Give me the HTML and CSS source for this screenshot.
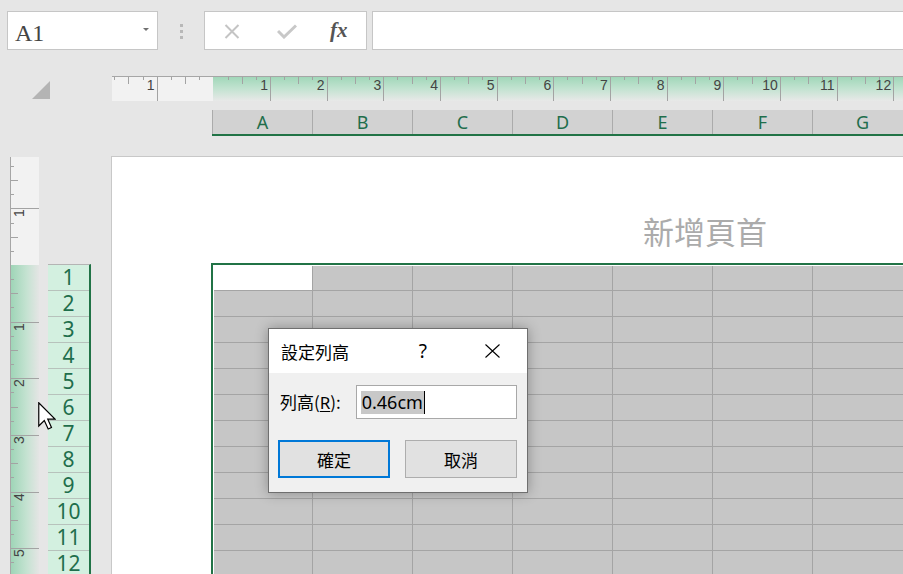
FILE: index.html
```html
<!DOCTYPE html>
<html lang="zh-Hant">
<head>
<meta charset="utf-8">
<title>Excel</title>
<link rel="stylesheet" href="styles.css">
</head>
<body>
<div class="app">
  <div class="formula-row">
    <div class="namebox"><span class="name">A1</span><span class="caret"></span></div>
    <div class="grip"><i></i><i></i><i></i></div>
    <div class="fbtns">
      <svg class="ico-x" width="16" height="15" viewBox="0 0 16 15"><path d="M1.5 1 L14.5 14 M14.5 1 L1.5 14" stroke="#c4c4c4" stroke-width="2" fill="none"/></svg>
      <svg class="ico-check" width="20" height="15" viewBox="0 0 20 15"><path d="M1 7 L7 13 L19 1.5" stroke="#c8c8c8" stroke-width="3" fill="none"/></svg>
      <span class="fx">fx</span>
    </div>
    <div class="finput"></div>
  </div>

  <div class="ruler-row">
    <div class="corner"><span class="selall"></span></div>
    <div class="hruler">
      <div class="htrack">
        <div class="hcm nob"><span>1</span></div>
        <div class="hcm"></div>
        <div class="hcm nob"><span>1</span></div>
        <div class="hcm"><span>2</span></div>
        <div class="hcm"><span>3</span></div>
        <div class="hcm"><span>4</span></div>
        <div class="hcm"><span>5</span></div>
        <div class="hcm"><span>6</span></div>
        <div class="hcm"><span>7</span></div>
        <div class="hcm"><span>8</span></div>
        <div class="hcm"><span>9</span></div>
        <div class="hcm"><span>10</span></div>
        <div class="hcm"><span>11</span></div>
        <div class="hcm"><span>12</span></div>
        <div class="hcm"></div>
      </div>
    </div>
  </div>

  <div class="colhead-row">
    <div class="colheads">
      <div class="ch">A</div>
      <div class="ch">B</div>
      <div class="ch">C</div>
      <div class="ch">D</div>
      <div class="ch">E</div>
      <div class="ch">F</div>
      <div class="ch">G</div>
    </div>
  </div>

  <div class="main">
    <div class="vruler">
      <div class="vtrack">
        <div class="vcm nob"></div>
        <div class="vcm"><span>1</span></div>
        <div class="vcm nob"></div>
        <div class="vcm"><span>1</span></div>
        <div class="vcm"><span>2</span></div>
        <div class="vcm"><span>3</span></div>
        <div class="vcm"><span>4</span></div>
        <div class="vcm"><span>5</span></div>
      </div>
    </div>
    <div class="rowheads">
      <div class="rh">1</div>
      <div class="rh">2</div>
      <div class="rh">3</div>
      <div class="rh">4</div>
      <div class="rh">5</div>
      <div class="rh">6</div>
      <div class="rh">7</div>
      <div class="rh">8</div>
      <div class="rh">9</div>
      <div class="rh">10</div>
      <div class="rh">11</div>
      <div class="rh">12</div>
    </div>
    <div class="page">
      <div class="page-header">新增頁首</div>
      <div class="sheet">
        <div class="cells"><div class="a1"></div></div>
      </div>
    </div>
  </div>
</div>

<div class="dialog">
  <div class="dlg-title">
    <span class="dlg-name">設定列高</span>
    <span class="dlg-help">?</span>
    <svg class="dlg-close" width="15" height="14" viewBox="0 0 15 14"><path d="M0.5 0.5 L14.5 13.5 M14.5 0.5 L0.5 13.5" stroke="#000" stroke-width="1.1" fill="none"/></svg>
  </div>
  <div class="dlg-body">
    <div class="dlg-row">
      <label class="dlg-label">列高(<u>R</u>):</label>
      <div class="dlg-input"><span class="sel">0.46cm</span><span class="text-caret"></span></div>
    </div>
    <div class="dlg-buttons">
      <div class="btn btn-default">確定</div>
      <div class="btn">取消</div>
    </div>
  </div>
</div>

<svg class="mouse" width="18" height="28" viewBox="0 0 12 18.7"><path d="M0.5 0.5 V16 L4.2 12.4 L6.8 18 L9 17 L6.5 11.5 H11.5 Z" fill="#fff" stroke="#000" stroke-width="0.8" stroke-linejoin="miter"/></svg>
</body>
</html>
```

FILE: styles.css
```css
* { box-sizing: border-box; margin: 0; padding: 0; }
html, body { width: 903px; height: 574px; overflow: hidden; }
body {
  background: #e6e6e6;
  font-family: "Noto Sans", "Noto Sans CJK TC", sans-serif;
  color: #000;
  position: relative;
}
.app { display: flex; flex-direction: column; height: 574px; }

/* formula bar */
.formula-row { display: flex; height: 39px; margin: 11px -2px 0 7px; }
.namebox {
  width: 151px; border: 1px solid #c6c6c6; background: #fff;
  display: flex; justify-content: space-between; align-items: flex-start;
  padding: 8px 8px 0 7px;
}
.name { font-family: "Liberation Serif", serif; font-size: 24px; line-height: 26px; color: #444; }
.caret {
  margin-top: 8px; width: 0; height: 0;
  border-left: 3px solid transparent; border-right: 3px solid transparent;
  border-top: 3px solid #707070;
}
.grip { width: 46px; display: flex; flex-direction: column; align-items: center; gap: 3px; padding-top: 13px; }
.grip i { display: block; width: 3px; height: 3px; background: #b8b8b8; }
.fbtns {
  width: 163px; border: 1px solid #c6c6c6; background: #fff;
  display: flex; align-items: center; padding-left: 19px;
}
.ico-x { margin-top: 1px; }
.ico-check { margin-left: 37px; margin-top: 2px; }
.fx {
  margin-left: 33px; font-family: "Liberation Serif", serif; font-style: italic; font-weight: bold;
  font-size: 21px; color: #555; line-height: 25px;
}
.finput { flex: 1; margin-left: 5px; border: 1px solid #c6c6c6; border-right: none; background: #fff; }

/* horizontal ruler */
.ruler-row { display: flex; height: 25px; margin-top: 26px; }
.corner { width: 112px; padding: 5px 0 0 32px; }
.selall {
  display: block; width: 0; height: 0;
  border-left: 18px solid transparent; border-bottom: 18px solid #b4b4b4;
}
.hruler {
  flex: 1; overflow: hidden; border-top: 1px solid #a6a6a6;
  background:
    linear-gradient(#f2f2f2, #f2f2f2) 0 0 / 101px 100% no-repeat,
    linear-gradient(to bottom, #a1d7b9 0%, #c3e3d1 50%, #e8e9e8 100%);
}
.htrack { display: flex; margin-left: -12px; height: 24px; }
.hcm {
  flex: 0 0 56.67px; height: 24px; border-left: 1px solid #a3a3a3;
  text-align: right; padding-right: 2px;
  font-family: "Liberation Sans", sans-serif; font-size: 14px; line-height: 16px; color: #444;
  background-image:
    linear-gradient(#a3a3a3, #a3a3a3),
    linear-gradient(#a3a3a3, #a3a3a3),
    linear-gradient(#a3a3a3, #a3a3a3);
  background-size: 1px 3px, 1px 7px, 1px 3px;
  background-position: 14.2px 0, 28.3px 0, 42.5px 0;
  background-repeat: no-repeat;
  background-origin: border-box;
}
.hcm.nob { border-left: none; }

/* column headers */
.colhead-row { display: flex; margin-top: 9px; padding-left: 212px; height: 26px; }
.colheads { flex: 1; display: flex; background: #d2d2d2; border-bottom: 2px solid #217346; overflow: hidden; }
.ch {
  flex: 0 0 100px; border-left: 1px solid #ababab; text-align: center;
  font-size: 18px; line-height: 24px; color: #1f6e4c;
}

/* main area */
.main { flex: 1; display: flex; margin-top: 20px; min-height: 0; }
.vruler {
  width: 29px; margin: 1px 0 0 10px; border-left: 1px solid #a6a6a6; overflow: hidden;
  background:
    linear-gradient(#f2f2f2, #f2f2f2) 0 0 / 100% 108px no-repeat,
    linear-gradient(to right, #9fd5b7 0%, #c4e2d1 55%, #e4e5e4 100%);
}
.vtrack { margin-top: -5.33px; }
.vcm {
  height: 56.67px; border-top: 1px solid #a3a3a3;
  font-family: "Liberation Sans", sans-serif; font-size: 14px; line-height: 16px; color: #444;
  background-image:
    linear-gradient(#a3a3a3, #a3a3a3),
    linear-gradient(#a3a3a3, #a3a3a3),
    linear-gradient(#a3a3a3, #a3a3a3);
  background-size: 3px 1px, 7px 1px, 3px 1px;
  background-position: 0 14.2px, 0 28.3px, 0 42.5px;
  background-repeat: no-repeat;
  background-origin: border-box;
}
.vcm.nob { border-top: none; }
.vcm span {
  display: block; width: 16px; height: 16px; margin-top: -4px;
  text-align: center; transform: rotate(-90deg);
}

.rowheads {
  width: 43px; margin: 108px 0 0 9px; align-self: flex-start;
  background: #d3f0e0; border-top: 1px solid #b4b4b4; border-right: 2px solid #217346;
}
.rh {
  height: 26px; border-bottom: 1px solid #b7c2bc; text-align: center;
  font-size: 21px; line-height: 25px; color: #1f6e4c;
}

.page {
  flex: 1; margin-left: 20px; background: #fff;
  border-left: 1px solid #c8c8c8; border-top: 1px solid #c8c8c8;
  display: flex; flex-direction: column; overflow: hidden;
}
.page-header {
  height: 106px; flex: none; padding: 58px 0 0 531px;
  font-family: "Noto Sans CJK TC", sans-serif; font-size: 31px; line-height: 45px;
  color: #ababab; white-space: nowrap;
}
.page-header { padding-top: 51px; }
.sheet {
  flex: 1; margin-left: 99px; background: #fff;
  border-top: 2px solid #217346; border-left: 2px solid #217346;
  padding: 1px 0 0 1px;
}
.cells {
  height: 100%;
  background-color: #c6c6c6;
  background-image:
    linear-gradient(to right, #a4a4a4 1px, transparent 1px),
    linear-gradient(to bottom, #a4a4a4 1px, transparent 1px);
  background-size: 100px 26px, 100px 26px;
  background-position: 98px 0, 0 24px;
}
.a1 { width: 98px; height: 24px; background: #fff; }

/* dialog */
.dialog {
  position: absolute; left: 268px; top: 328px; width: 260px; height: 165px;
  background: #f0f0f0; border: 1px solid #6f6f6f;
  box-shadow: 0 0 12px rgba(0, 0, 0, 0.3);
  font-family: "Noto Sans CJK TC", "Noto Sans", sans-serif;
}
.dlg-title {
  height: 44px; background: #fff; display: flex; align-items: center; padding-left: 12px;
}
.dlg-name { flex: 1; font-size: 17px; line-height: 25px; }
.dlg-help { font-family: "Noto Sans", sans-serif; font-size: 19px; line-height: 26px; margin-right: 58px; }
.dlg-close { margin-right: 27px; }
.dlg-body { padding: 12px 10px 0 9px; }
.dlg-row { display: flex; align-items: center; height: 34px; }
.dlg-label { width: 78px; padding-left: 2px; font-size: 17px; line-height: 25px; }
.dlg-label u { font-family: "Noto Sans", sans-serif; text-underline-offset: 2px; }
.dlg-input {
  width: 162px; height: 34px; background: #fff; border: 1px solid #a8a8a8;
  display: flex; align-items: center; padding-left: 4px;
}
.sel {
  background: #c8c8c8; font-family: "Noto Sans", sans-serif; font-size: 18px; line-height: 25px;
  height: 23px; display: flex; align-items: center; padding: 0 1px;
}
.text-caret { width: 1px; height: 23px; background: #000; }
.dlg-buttons { display: flex; gap: 15px; margin-top: 21px; }
.btn {
  width: 112px; height: 38px; background: #e1e1e1; border: 1px solid #adadad;
  display: flex; align-items: center; justify-content: center; font-size: 17px; line-height: 25px;
}
.btn-default { border: 2px solid #0078d7; }

.mouse { position: absolute; left: 38px; top: 402px; }
```
